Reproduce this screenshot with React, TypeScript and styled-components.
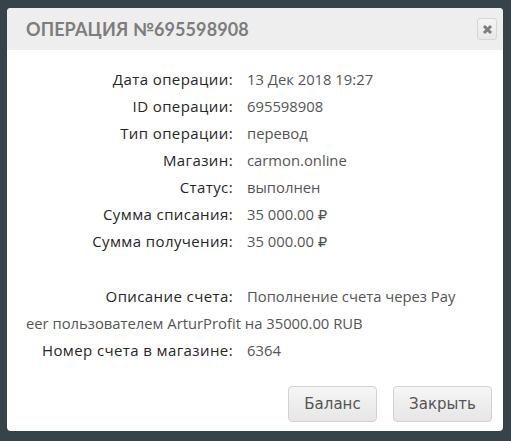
import styled, { createGlobalStyle } from 'styled-components';

type Row = {
  label: string;
  value: string;
};

const rows: Row[] = [
  { label: 'Дата операции:', value: '13 Дек 2018 19:27' },
  { label: 'ID операции:', value: '695598908' },
  { label: 'Тип операции:', value: 'перевод' },
  { label: 'Магазин:', value: 'carmon.online' },
  { label: 'Статус:', value: 'выполнен' },
  { label: 'Сумма списания:', value: '35 000.00 ₽' },
  { label: 'Сумма получения:', value: '35 000.00 ₽' },
];

const GlobalStyle = createGlobalStyle`
  html, body {
    margin: 0;
    padding: 0;
    background: #36434b;
  }
  body {
    font-family: 'Open Sans', 'DejaVu Sans', sans-serif;
  }
`;

const Page = styled.div`
  width: 511px;
  height: 441px;
  box-sizing: border-box;
  padding: 8px 8px 10px 7px;
`;

const Dialog = styled.div`
  width: 496px;
  height: 423px;
  background: #fff;
  border-radius: 4px;
  overflow: hidden;
  display: flex;
  flex-direction: column;
`;

const Header = styled.div`
  height: 42px;
  flex: none;
  background: #eeeeee;
  display: flex;
  align-items: center;
  justify-content: space-between;
  padding: 0 6px 0 19px;
`;

const Title = styled.h3`
  margin: 0;
  font-family: 'Lato', sans-serif;
  font-weight: 700;
  font-size: 18px;
  letter-spacing: 0.1px;
  color: #7d7d7d;
`;

const CloseButton = styled.button`
  width: 20px;
  height: 22px;
  padding: 0;
  border: 1px solid #d6d6d6;
  border-radius: 3px;
  background: linear-gradient(#f4f4f4, #e8e8e8);
  display: flex;
  align-items: center;
  justify-content: center;
  cursor: pointer;
`;

const Body = styled.div`
  flex: 1;
  padding: 16px 19px 0 19px;
  font-size: 15px;
  line-height: 27px;
`;

const Grid = styled.div`
  display: grid;
  grid-template-columns: 207px 1fr;
  column-gap: 14px;
`;

const Label = styled.span`
  text-align: right;
  color: #262626;
  letter-spacing: 0.4px;
`;

const Value = styled.span`
  color: #555;
  font-size: 14.8px;
`;

const Spacer = styled.div`
  height: 28px;
`;

const WrapRow = styled.div``;

const InlineLabel = styled(Label)`
  display: inline-block;
  width: 207px;
  margin-right: 14px;
`;

const Footer = styled.div`
  display: flex;
  justify-content: flex-end;
  gap: 16px;
  padding: 0 11px 9px;
`;

const Button = styled.button<{ $w: number }>`
  width: ${(p) => p.$w}px;
  height: 36px;
  border: 1px solid #d2d2d2;
  border-radius: 4px;
  background: linear-gradient(#f6f6f6, #e6e6e6);
  font-family: 'DejaVu Sans', sans-serif;
  font-size: 15px;
  color: #555;
  cursor: pointer;
`;

const App = () => {
  return (
    <>
      <GlobalStyle />
      <Page>
        <Dialog>
          <Header>
            <Title>ОПЕРАЦИЯ №695598908</Title>
            <CloseButton>
              <svg width="11" height="11" viewBox="0 0 11 11">
                <path d="M2 2 L9 9 M9 2 L2 9" stroke="#7d7d7d" strokeWidth="3" />
              </svg>
            </CloseButton>
          </Header>
          <Body>
            <Grid>
              {rows.map((r) => (
                <>
                  <Label key={r.label}>{r.label}</Label>
                  <Value>{r.value}</Value>
                </>
              ))}
            </Grid>
            <Spacer />
            <WrapRow>
              <InlineLabel>Описание счета:</InlineLabel>
              <Value>
                Пополнение счета через Pay
                <br />
                eer пользователем ArturProfit на 35000.00 RUB
              </Value>
            </WrapRow>
            <Grid>
              <Label>Номер счета в магазине:</Label>
              <Value>6364</Value>
            </Grid>
          </Body>
          <Footer>
            <Button $w={89}>Баланс</Button>
            <Button $w={99}>Закрыть</Button>
          </Footer>
        </Dialog>
      </Page>
    </>
  );
};

export default App;
